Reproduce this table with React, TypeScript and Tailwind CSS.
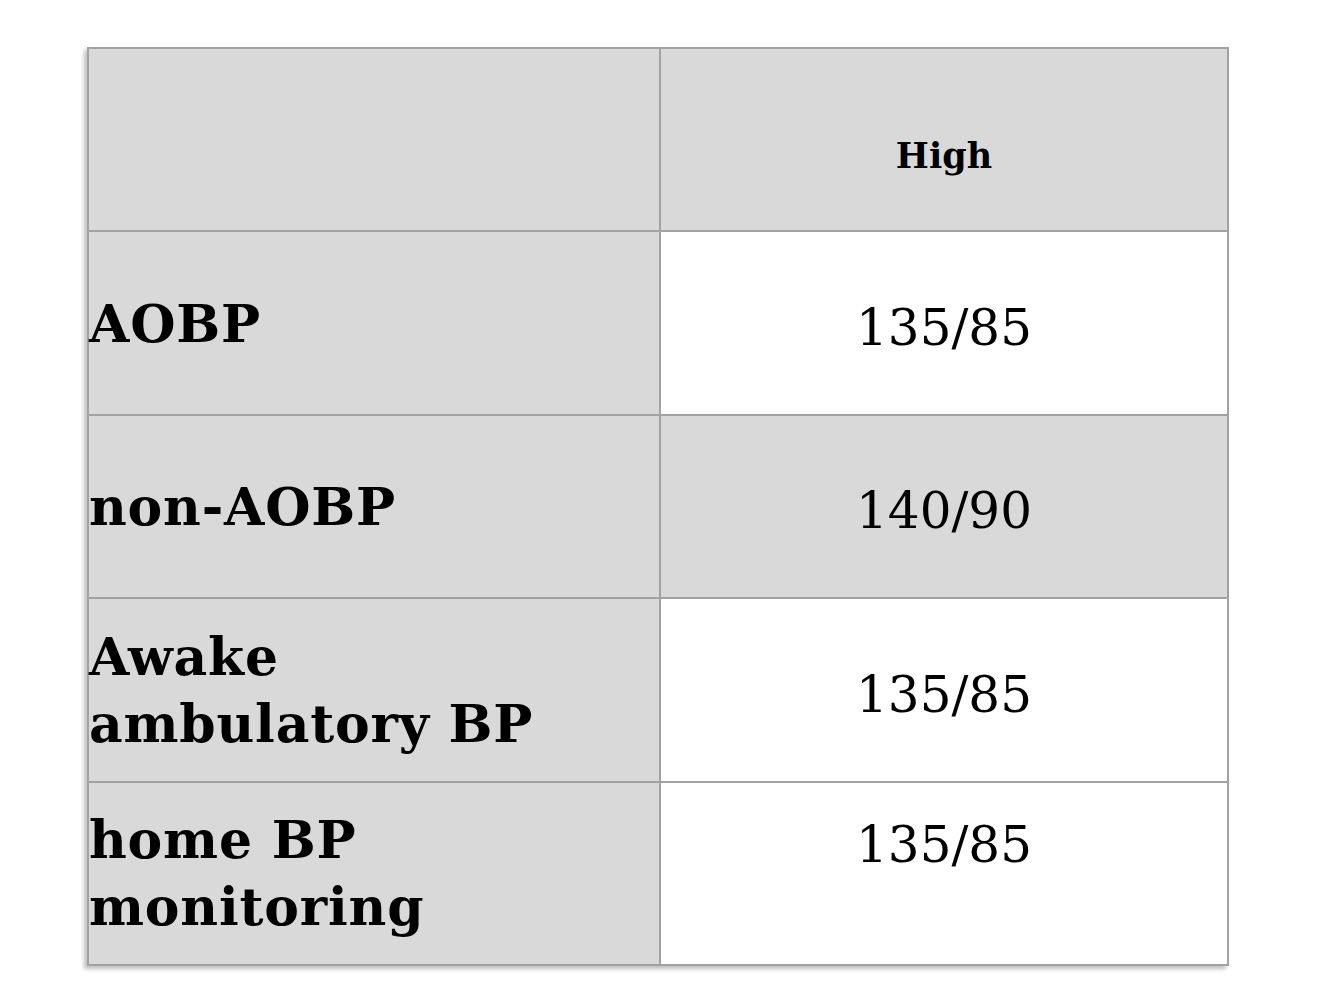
import React from 'react'

const rows = [
  { label: ['AOBP'], value: ['135/85'], shaded: false },
  { label: ['non-AOBP'], value: ['140/90'], shaded: true },
  { label: ['Awake', 'ambulatory BP'], value: ['135/85'], shaded: false },
  { label: ['home BP', 'monitoring'], value: ['135/85', '\u00a0'], shaded: false },
]

export default function App() {
  return (
    <div className="min-h-[1000px] w-[1332px] bg-white pt-[47px] pl-[87px] font-['DejaVu_Serif',Georgia,serif] text-black">
      <div className="grid w-[1142px] grid-cols-[570px_566px] grid-rows-[repeat(5,181.4px)] gap-[2px] bg-[#a2a2a2] p-[2px] shadow-[-3px_3px_4px_rgba(0,0,0,0.25)]">
        <div className="bg-[#d9d9d9]" />
        <div className="flex items-center justify-center bg-[#d9d9d9] pt-[34px] text-[35px] font-bold">High</div>
        {rows.map((r) => (
          <React.Fragment key={r.label.join(' ')}>
            <div className="flex flex-col justify-center bg-[#d9d9d9] text-[52px] font-bold leading-[67px] tracking-[0.8px]">
              {r.label.map((l) => (
                <span key={l}>{l}</span>
              ))}
            </div>
            <div
              className={`flex flex-col items-center justify-center pt-[10px] text-[50px] leading-[66px] ${
                r.shaded ? 'bg-[#d9d9d9]' : 'bg-white'
              }`}
            >
              {r.value.map((v, i) => (
                <span key={i}>{v}</span>
              ))}
            </div>
          </React.Fragment>
        ))}
      </div>
    </div>
  )
}
